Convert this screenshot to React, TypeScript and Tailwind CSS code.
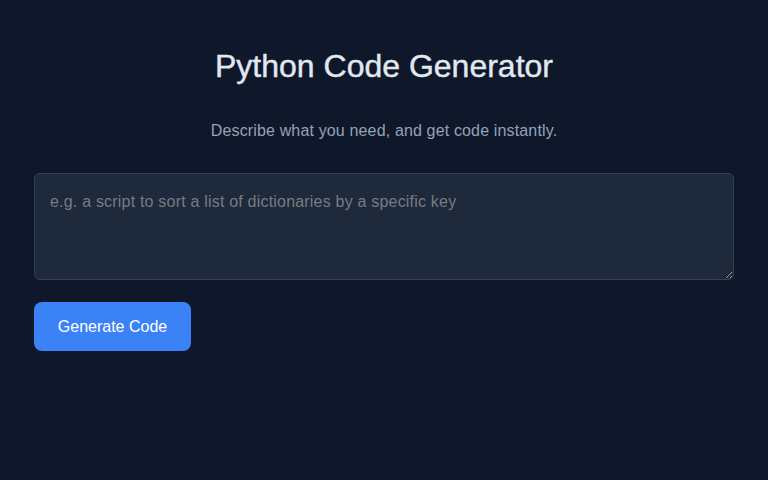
import { useState } from 'react';

export default function App() {
  const [prompt, setPrompt] = useState('');

  return (
    <div className="min-h-screen w-full bg-[#0f172a] px-[34px] pt-[46px] font-['Liberation_Sans',Arial,sans-serif]">
      {/* Header */}
      <h1 className="text-center text-[32px] leading-[40px] font-normal text-[#e2e8f0] [-webkit-text-stroke:0.4px_#e2e8f0]">
        Python Code Generator
      </h1>
      <p className="mt-[33px] text-center text-base leading-6 tracking-[0.15px] text-[#94a3b8]">
        Describe what you need, and get code instantly.
      </p>

      {/* Prompt */}
      <textarea
        value={prompt}
        onChange={e => setPrompt(e.target.value)}
        placeholder="e.g. a script to sort a list of dictionaries by a specific key"
        className="mt-[30px] block h-[107px] w-full rounded-md border border-[#334155] bg-[#1e293b] px-[15px] pt-[16px] pb-[15px] text-base leading-6 tracking-[0.2px] text-[#e2e8f0] placeholder:text-[#787b82] focus:outline-none"
      />

      <button className="mt-[22px] h-[49px] w-[157px] rounded-lg bg-[#3b82f6] text-base text-white">
        Generate Code
      </button>
    </div>
  );
}
